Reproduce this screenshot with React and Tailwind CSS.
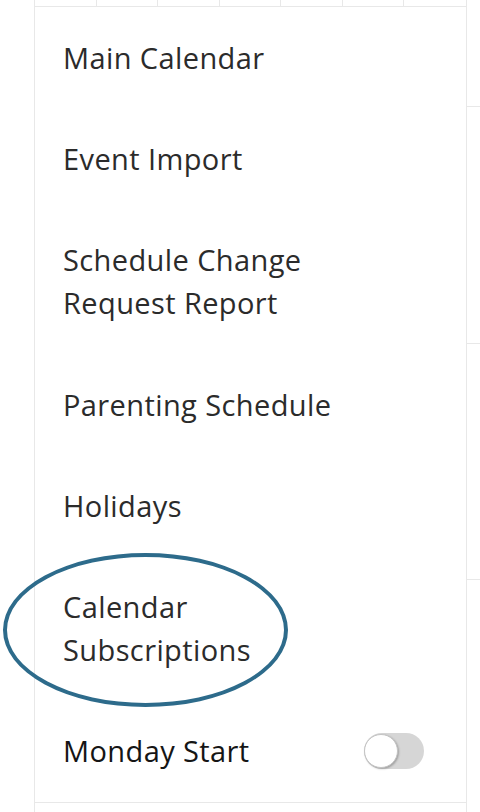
const items = [
  ['Main Calendar'],
  ['Event Import'],
  ['Schedule Change', 'Request Report'],
  ['Parenting Schedule'],
  ['Holidays'],
  ['Calendar', 'Subscriptions'],
];

export default function App() {
  return (
    <div className="relative w-[480px] h-[812px] overflow-hidden bg-white flex font-['Open_Sans',sans-serif]">
      {/* left gutter */}
      <div className="w-[34px] shrink-0" />

      {/* middle column */}
      <div className="w-[433px] shrink-0 border-l border-r border-[#e8e8e8] flex flex-col">
        {/* calendar grid peeking out on top */}
        <div className="h-[7px] grid grid-cols-7 border-b border-[#e8e8e8]">
          {[0, 1, 2, 3, 4, 5].map((i) => (
            <div key={i} className="border-r border-[#e8e8e8]" />
          ))}
          <div />
        </div>

        {/* menu */}
        <div className="flex flex-col text-[29px] leading-[43.5px] tracking-[0.4px] text-[#2b2b2b]">
          {items.map((lines) => (
            <div key={lines[0]} className="pl-[28px] pr-[40px] py-[28.8px]">
              {lines.map((l) => (
                <div key={l}>{l}</div>
              ))}
            </div>
          ))}
          <div className="pl-[28px] pr-[42px] py-[28.8px] flex items-center justify-between text-[#151515]">
            <span>Monday Start</span>
            <div className="relative w-[60px] h-[36px] rounded-full bg-[#d6d6d6]">
              <div className="absolute left-0 top-[1px] w-[34px] h-[34px] rounded-full bg-white border border-[#c4c4c4] shadow-[1px_1px_2px_rgba(0,0,0,0.25)]" />
            </div>
          </div>
        </div>

        <div className="flex-1 border-t border-[#e8e8e8]" />
      </div>

      {/* right column */}
      <div className="flex-1 flex flex-col">
        <div className="h-[107px] border-b border-[#e8e8e8]" />
        <div className="h-[237px] border-b border-[#e8e8e8]" />
        <div className="h-[236px] border-b border-[#e8e8e8]" />
      </div>

      {/* annotation ring */}
      <div className="absolute left-[3px] top-[553px] w-[285px] h-[154px] rounded-[50%] border-[4.5px] border-[#2d6b8b]" />
    </div>
  );
}
